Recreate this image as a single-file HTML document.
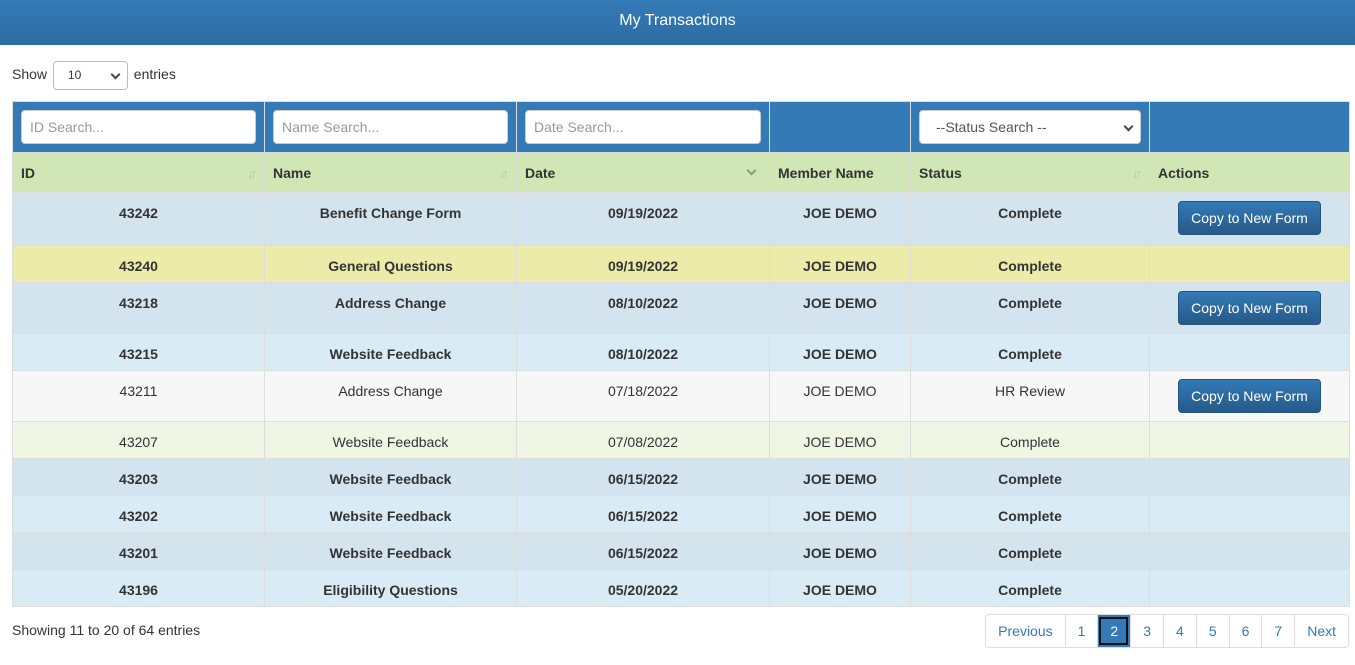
<!DOCTYPE html>
<html><head><meta charset="utf-8"><style>
*{box-sizing:border-box}
body{margin:0;width:1355px;height:665px;overflow:hidden;background:#fff;font-family:"Liberation Sans",Arial,sans-serif;font-size:14px;color:#333}
.top{height:45px;background:linear-gradient(#337ab7,#2e6da4);color:#fff;text-align:center;font-size:16px;line-height:42px;border-bottom:1px solid #2e6da4}
.show{position:absolute;left:12px;top:61px;height:28px;line-height:26px}
.sel{display:inline-block;width:75px;height:29px;border:1px solid #bbb;border-radius:4px;vertical-align:middle;margin:0 2px;position:relative;font-size:12px;padding-left:14px;line-height:27px}
.chev{position:absolute;right:8px;top:9px;width:7px;height:7px;border-right:2px solid #444;border-bottom:2px solid #444;transform:rotate(45deg)}
table{position:absolute;left:12px;top:101px;border-collapse:collapse;width:1338px}
td,th{border:1px solid #ddd;padding:0}
tr.s th{background:#337ab7;height:51px;padding:0 8px}
.inp{height:34px;background:#fff;border:1px solid #ccc;border-radius:4px;color:#999;font-weight:normal;text-align:left;padding-left:8px;line-height:32px;font-size:14px;position:relative}
tr.h th{background:#d0e6b5;height:40px;text-align:left;padding:0 8px;position:relative;font-size:14px}
.si{position:absolute;right:10px;top:13px;color:#b3c9a0;font-size:13px;font-weight:bold;letter-spacing:-3px}
td{text-align:center;vertical-align:top;padding-top:12px;font-weight:bold}
tr.n td{font-weight:normal}
.b{display:inline-block;background:linear-gradient(#337ab7,#265a88);color:#fff;font-weight:normal;border:1px solid #245580;border-radius:4px;padding:0 12px;height:34px;line-height:32px;margin-top:-2px}
td.a{padding-top:10px}
.foot{position:absolute;left:12px;top:622px}
.pg{position:absolute;right:6px;top:614px;display:flex;border:1px solid #ddd;border-radius:4px;height:34px}
.pg span{display:block;padding:0 12px;line-height:32px;color:#337ab7;border-left:1px solid #ddd}
.pg span:first-child{border-left:none}
.pg .ac{background:#337ab7;color:#fff;outline:2px solid #111;outline-offset:-4px}
</style></head><body>
<div class="top">My Transactions</div>
<div class="show">Show <span class="sel">10<span class="chev"></span></span> entries</div>
<table>
<tr class="s"><th style="width:252px"><div class="inp">ID Search...</div></th><th style="width:252px"><div class="inp">Name Search...</div></th><th style="width:253px"><div class="inp">Date Search...</div></th><th style="width:141px"></th><th style="width:239px"><div class="inp" style="color:#555;padding-left:16px">--Status Search --<span class="chev" style="top:12px"></span></div></th><th></th></tr>
<tr class="h"><th>ID<span class="si">↓↑</span></th><th>Name<span class="si">↓↑</span></th><th>Date<span class="chev" style="right:14px;top:14px;border-color:#889a78"></span></th><th>Member Name</th><th>Status<span class="si">↓↑</span></th><th>Actions</th></tr>
<tr style="background:#d3e4ee;height:53px"><td>43242</td><td>Benefit Change Form</td><td>09/19/2022</td><td>JOE DEMO</td><td>Complete</td><td class="a"><span class="b">Copy to New Form</span></td></tr>
<tr style="background:#ecebaa;height:37px"><td>43240</td><td>General Questions</td><td>09/19/2022</td><td>JOE DEMO</td><td>Complete</td><td></td></tr>
<tr style="background:#d3e4ee;height:51px"><td>43218</td><td>Address Change</td><td>08/10/2022</td><td>JOE DEMO</td><td>Complete</td><td class="a"><span class="b">Copy to New Form</span></td></tr>
<tr style="background:#d9ebf5;height:37px"><td>43215</td><td>Website Feedback</td><td>08/10/2022</td><td>JOE DEMO</td><td>Complete</td><td></td></tr>
<tr class="n" style="background:#f7f7f7;height:51px"><td>43211</td><td>Address Change</td><td>07/18/2022</td><td>JOE DEMO</td><td>HR Review</td><td class="a"><span class="b">Copy to New Form</span></td></tr>
<tr class="n" style="background:#eff6e4;height:37px"><td>43207</td><td>Website Feedback</td><td>07/08/2022</td><td>JOE DEMO</td><td>Complete</td><td></td></tr>
<tr style="background:#d3e4ee;height:37px"><td>43203</td><td>Website Feedback</td><td>06/15/2022</td><td>JOE DEMO</td><td>Complete</td><td></td></tr>
<tr style="background:#d9ebf5;height:37px"><td>43202</td><td>Website Feedback</td><td>06/15/2022</td><td>JOE DEMO</td><td>Complete</td><td></td></tr>
<tr style="background:#d3e4ee;height:37px"><td>43201</td><td>Website Feedback</td><td>06/15/2022</td><td>JOE DEMO</td><td>Complete</td><td></td></tr>
<tr style="background:#d9ebf5;height:37px"><td>43196</td><td>Eligibility Questions</td><td>05/20/2022</td><td>JOE DEMO</td><td>Complete</td><td></td></tr>
</table>
<div class="foot">Showing 11 to 20 of 64 entries</div>
<div class="pg"><span>Previous</span><span>1</span><span class="ac">2</span><span>3</span><span>4</span><span>5</span><span>6</span><span>7</span><span>Next</span></div>
</body></html>
